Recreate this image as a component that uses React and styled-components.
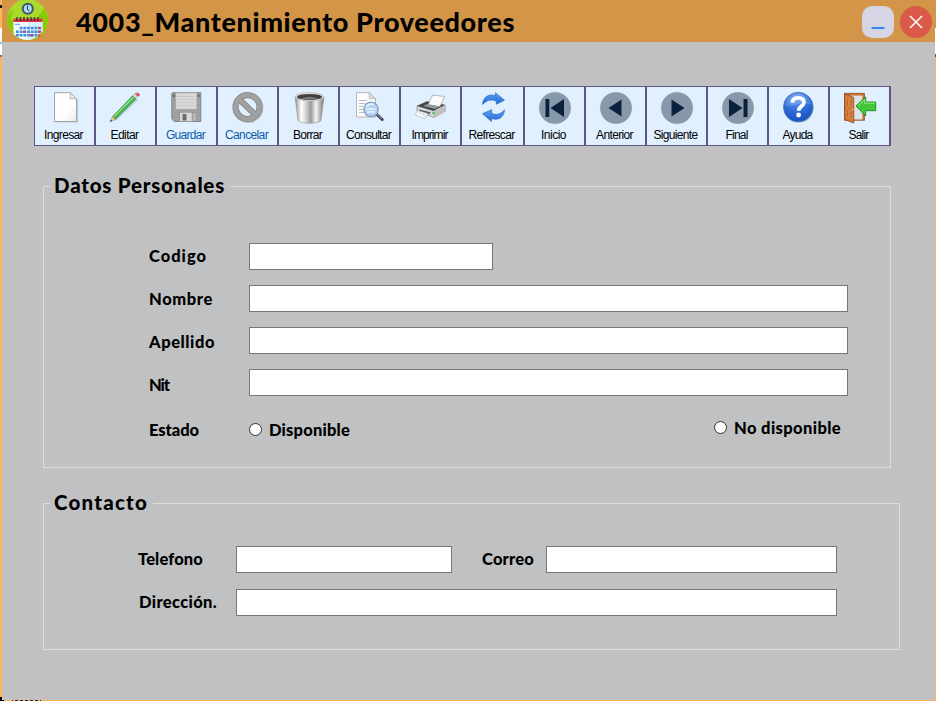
import React, { useLayoutEffect, useRef, useState } from "react";
import styled, { createGlobalStyle } from "styled-components";

const GlobalStyle = createGlobalStyle`
  *, *::before, *::after { box-sizing: border-box; }
  html, body { margin: 0; padding: 0; }
  body { width: 936px; height: 701px; overflow: hidden; background: #ffb45c; }
`;

const gothic = `"Century Gothic", "URW Gothic", Lato, sans-serif`;

const Desktop = styled.div`
  width: 936px;
  height: 701px;
  display: grid;
  grid-template: 700px 1px / 2px 933px 1px;
  overflow: hidden;
`;

const LeftEdge = styled.div`
  background: linear-gradient(
    #ffb45c 0 5px, #111 5px 8px, #ffb45c 8px 28px, #fff 28px 42px,
    #7fc4e0 42px 44px, #fff 44px 55px, #777 55px 57px, #ffb45c 57px 697px, #000 697px
  );
`;

const RightEdge = styled.div`
  background: linear-gradient(#d39547 0 28px, #fff 28px 54px, #555 54px 57px, #ffb45c 57px);
`;

const BottomEdge = styled.div`
  grid-column: 1 / -1;
  background: linear-gradient(90deg, #000 0 4px, #ffb45c 4px 12px, transparent 12px 41px, #ffb45c 41px),
    repeating-linear-gradient(90deg, #222 0 3px, #ffb45c 3px 5px);
`;

const Window = styled.main`
  display: flex;
  flex-direction: column;
  background: #c1c0c2;
`;

const TitleBar = styled.header`
  display: flex;
  height: 42px;
  padding: 0 3px 0 5px;
  background: #d39547;
`;

const Title = styled.h1`
  margin: 0 auto 0 28px;
  font: 900 27px/42px ${gothic};
  padding-top: 1px;
  height: 42px;
  color: #000;
`;

const WindowButton = styled.button`
  width: 32px;
  height: 32px;
  margin: 6px 0 0 6px;
  padding: 0;
  border: 0;
  border-radius: ${(p) => (p.$close ? "50%" : "10px")};
  background: ${(p) => (p.$close ? "#da5a4a" : "#d5d5e3")};
`;

const Toolbar = styled.nav`
  display: flex;
  width: 857px;
  height: 60px;
  margin: 44px 0 0 32px;
  border-right: 1px solid #5b5687;
`;

const ToolButton = styled.button`
  display: flex;
  flex-direction: column;
  align-items: center;
  width: ${(p) => (p.$wide ? 63 : 61)}px;
  height: 60px;
  padding: 5px 0 0 1px;
  border: 1px solid #5b5687;
  background: #e1f0ff;
  color: ${(p) => (p.$muted ? "#0d5cab" : "#000")};
  font: 12px/14px "Liberation Sans", Arial, sans-serif;
`;

const ToolLabel = styled.span`
  margin: 4px 3px 0 0;
`;

const Svg = styled.svg`
  display: block;
  flex: none;
  overflow: visible;
`;

const Group = styled.section`
  width: ${(p) => p.$width}px;
  height: ${(p) => p.$height}px;
  margin: ${(p) => p.$top}px 0 0 41px;
  border: 1px solid #dcdddd;
  background: #bfc1c2;
`;

const Legend = styled.h2`
  width: ${(p) => p.$width}px;
  height: 24px;
  margin: -13px 0 0 6px;
  padding-left: 4px;
  background: #c0c1c2;
  font: 900 20.5px/22px ${gothic};
  color: #000;
`;

const Row = styled.div`
  display: flex;
  align-items: flex-start;
  height: ${(p) => p.$height || 42}px;
  padding-left: ${(p) => p.$indent}px;
`;

const Label = styled.label`
  flex: none;
  width: ${(p) => p.$width}px;
  margin-top: ${(p) => p.$drop || 0}px;
  font: 900 16.5px/26px ${gothic};
  color: #000;
`;

const Field = styled.input`
  flex: none;
  width: ${(p) => p.$width}px;
  height: 27px;
  margin: 0;
  padding: 2px 5px;
  border: 1px solid #777;
  border-radius: 0;
  outline: 0;
  background: #fff;
  font: 16px ${gothic};
`;

const Radio = styled.input`
  appearance: none;
  flex: none;
  width: 13px;
  height: 13px;
  margin: ${(p) => p.$top}px 7px 0 ${(p) => p.$left || 0}px;
  border: 1px solid #333;
  border-radius: 50%;
  background: #fff;
`;

const FitSpan = styled.span`
  display: inline-block;
  white-space: nowrap;
`;

/* Spreads or tightens the letters so that the text takes the given width. */
function Fit({ width, children }) {
  const ref = useRef(null);
  const [spacing, setSpacing] = useState(0);
  useLayoutEffect(() => {
    const natural = ref.current.getBoundingClientRect().width;
    setSpacing((width - natural) / children.length);
  }, [width, children]);
  return (
    <FitSpan ref={ref} style={{ letterSpacing: `${spacing}px` }}>
      {children}
    </FitSpan>
  );
}

const Icon = ({ children }) => (
  <Svg width="32" height="32" viewBox="0 0 32 32">{children}</Svg>
);

const NewIcon = () => (
  <Icon>
    <defs><linearGradient id="paper" x1="0" y1="0" x2="1" y2="1"><stop offset="0" stopColor="#fff" /><stop offset=".6" stopColor="#fff" /><stop offset="1" stopColor="#e9e9e9" /></linearGradient></defs>
    <path d="M6 1.5h16l7 7v22H6z" fill="#b9c0c8" opacity=".7" />
    <path d="M5.5.7h15.8l6.3 6.4v22.4H5.5z" fill="url(#paper)" stroke="#a2a2a2" />
    <path d="M21.3.7q.3 4-.5 6.2 3-.8 6.8.2z" fill="#eee" stroke="#a8a8a8" strokeWidth=".8" />
  </Icon>
);

const EditIcon = () => (
  <Icon>
    <path d="m3 29.500 4-1.500L28 8l-2-2z" fill="#9bb1bd" opacity=".5" />
    <path d="m2.600 24.600 2.800 2.600L26 6.600l-3.200-2.900z" fill="#45b649" stroke="#257d2d" strokeWidth=".7" />
    <path d="m3.900 24.600 19.800-19.500" stroke="#a0e59b" strokeWidth="1.300" />
    <path d="M2.600 24.600.2 29.500l5.200-2.300z" fill="#f0c98c" stroke="#9b7648" strokeWidth=".5" />
    <path d="m.8 27.800-.7 2 2-.7z" fill="#222" />
    <path d="m22.800 3.700 2-2 3.200 2.900-2 2z" fill="#d9dde2" stroke="#8c929b" strokeWidth=".5" />
    <path d="m24.800 1.700 1.200-1q1.200-.7 2.900.5 1.500 1.500.5 2.500L28 4.600z" fill="#d2464f" />
    <path d="m25.700 1.300 2.300-.2" stroke="#f6b2b3" />
  </Icon>
);

const SaveIcon = () => (
  <Icon>
    <path d="M1.500.7h28.300v28.800H3.500l-2.700-2.600V1.400z" fill="#a0a0a0" stroke="#858585" />
    <path d="M5 1h20.500v16H5z" fill="#d9d9d9" stroke="#bdbdbd" strokeWidth=".6" />
    <path d="M6 4.500h18.500M6 7.500h18.500M6 10.500h18.500M6 13.500h18.500" stroke="#c6c6c6" strokeWidth=".9" />
    <path d="M2 2.500h1.800V5H2zM26.700 2.500h1.800V5h-1.800z" fill="#606060" />
    <path d="M8.500 20.500h17.200v8.700H8.500z" fill="#868686" />
    <path d="M9 20.700h11.800v8.500H9z" fill="#dadada" />
    <path d="M11.500 22h4v6.500h-4z" fill="#6d6d6d" />
    <path d="M21.500 21h4v8h-4z" fill="#b5b5b5" />
  </Icon>
);

const CancelIcon = () => (
  <Icon>
    <circle cx="16" cy="15.700" r="12.400" fill="none" stroke="#b8c1ca" strokeWidth="6" />
    <circle cx="15.500" cy="15" r="12" fill="none" stroke="#858585" strokeWidth="6" />
    <path d="m7 7 17 16.500" stroke="#858585" strokeWidth="6" />
    <circle cx="15.500" cy="15" r="12" fill="none" stroke="#a1a1a1" strokeWidth="4.500" />
    <path d="m7 7 17 16.500" stroke="#a1a1a1" strokeWidth="4.500" />
  </Icon>
);

const DeleteIcon = () => (
  <Icon>
    <defs><linearGradient id="steel"><stop offset="0" stopColor="#8d8d8d" /><stop offset=".22" stopColor="#fff" /><stop offset=".38" stopColor="#d2d2d2" /><stop offset=".55" stopColor="#999" /><stop offset=".72" stopColor="#f5f5f5" /><stop offset="1" stopColor="#777" /></linearGradient></defs>
    <path d="m2 4.500 3 24c3 3.700 20 3.700 23 0l3-24z" fill="url(#steel)" stroke="#858585" strokeWidth=".5" />
    <ellipse cx="16.500" cy="4.700" rx="14.500" ry="4.200" fill="#ddd" stroke="#aaa" strokeWidth=".5" />
    <ellipse cx="16.500" cy="4.900" rx="12.500" ry="3" fill="#414141" />
    <path d="M8 6.500q8.500-3.500 17 0-8.500 2-17 0" fill="#777" />
  </Icon>
);

const SearchIcon = () => (
  <Icon>
    <path d="M2.500.6h12.700l6.300 6.200V25h-19z" fill="#fcfcfc" stroke="#b9b6b4" />
    <path d="M15.200.6v6.200h6.300z" fill="#ddd" stroke="#aaa" strokeWidth=".6" />
    <path d="M5 8.500h8M5 11.500h6M5 14.500h4M5 17.500h4M5 20.500h5" stroke="#afc1ce" />
    <path d="m23 22.500 5.200 5" stroke="#39435b" strokeWidth="3" strokeLinecap="round" />
    <path d="m23.500 22.300 4.500 4.200" stroke="#a5b4cd" strokeWidth="1" />
    <circle cx="17" cy="17.300" r="7.200" fill="#b3d2f3" stroke="#8f9fc4" strokeWidth="1.400" />
    <path d="M12 15q3-4 8-2.500M12.500 17h9M13 20h8" stroke="#e9f5ff" strokeWidth="1.500" fill="none" />
  </Icon>
);

const PrintIcon = () => (
  <Icon>
    <path d="M2 14 12 9.500l18 3.500.5 6-11.500 6.500L2 19z" fill="#d5d6d6" stroke="#888" strokeWidth=".7" />
    <path d="m2 14 10-4.500L30 13l-11.500 6z" fill="#424548" />
    <path d="m13 13 4.500-10 12 1.500L25 14.500z" fill="#fafafa" stroke="#9c9c9c" strokeWidth=".7" />
    <path d="m8 14 4-2 13 2.500-5 2.500z" fill="#90979b" />
    <path d="m19 19 11.500-6v6L19 25.500z" fill="#bfc0bf" />
    <path d="m4 17.500 11.500 2.700-1 2L4 19.500z" fill="#53585b" />
    <path d="m3 18.500 9.500 3-2.500 5.500L0 22.500z" fill="#f7fbfc" stroke="#a4aeb4" strokeWidth=".6" />
    <path d="m3.500 20.500 6 2-1 2.500" stroke="#bed5df" fill="none" />
    <circle cx="18.500" cy="21" r="1.200" fill="#45bd4b" />
  </Icon>
);

const RefreshIcon = () => (
  <Icon>
    <defs><linearGradient id="blueArrow" x1="0" y1="0" x2="0" y2="1"><stop offset="0" stopColor="#5ea2f5" /><stop offset="1" stopColor="#2468d6" /></linearGradient></defs>
    <path d="M5.500 12.500C6 4.500 13 1 18.500 4V.7L27.500 8.300l-8.200 3.900V9.300C14 6.500 9.500 8.500 5.500 12.500z" fill="url(#blueArrow)" stroke="#286bc4" strokeWidth=".7" />
    <path d="M27.500 18c-.5 8-7.500 11-13 8.300v3.200L5.500 21.700l9.200-4v3.500c4.800 2.500 9 .8 12.800-3.200z" fill="url(#blueArrow)" stroke="#286bc4" strokeWidth=".7" />
  </Icon>
);

const navShapes = {
  first: "M6.500 7h3.800v18H6.500zM11.500 16 25 7v18z",
  prev: "M8.500 16 21.500 7.500v17z",
  next: "M10.500 7.500v17L23.500 16z",
  last: "M7 7v18l13.500-9zM21.500 7h4v18h-4z",
};

const NavIcon = ({ kind }) => (
  <Icon>
    <circle cx="16" cy="16" r="15.800" fill="#8798aa" stroke="#9e9f98" strokeWidth=".4" />
    <path d={navShapes[kind]} fill="#0a213d" />
  </Icon>
);

const HelpIcon = () => (
  <Icon>
    <defs><radialGradient id="help" cx=".45" cy=".2" r=".8"><stop offset="0" stopColor="#6b9fee" /><stop offset=".5" stopColor="#3270da" /><stop offset="1" stopColor="#1453bd" /></radialGradient></defs>
    <circle cx="15.700" cy="15.800" r="15" fill="#a9b9ce" />
    <circle cx="15.200" cy="15" r="14.700" fill="url(#help)" stroke="#3d6fc0" strokeWidth=".7" />
    <path d="M2 14C3 5 9 1.500 15 1.500S27 5 28.500 13q-6-3-13-1T2 14z" fill="#fff" opacity=".15" />
    <path d="M9.500 10.700q0-4.800 5.700-4.800 5.700 0 5.700 4.500c0 4-5.200 3.700-5.200 8.300" fill="none" stroke="#fff" strokeWidth="3.800" />
    <circle cx="15.600" cy="23" r="2.400" fill="#fff" />
  </Icon>
);

const ExitIcon = () => (
  <Icon>
    <path d="M.5 1.300h20v27H.5z" fill="#c56b2b" stroke="#98491b" strokeWidth=".7" />
    <path d="M4 3.500h14.500v24H4z" fill="#dce2e6" />
    <path d="m.7 1.500 9 4v25.500l-9-3.500z" fill="#d27936" stroke="#93471b" strokeWidth=".8" />
    <path d="m2.500 5 2 .9v8.700l-2-.7zM6 6.600l2 .8V16l-2-.8zM2.500 17l2 .8v8l-2-.7zM6 18.500l2 .7V27l-2-.8z" fill="#bd6328" stroke="#e4a063" strokeWidth=".5" />
    <circle cx="8.800" cy="17.500" r=".8" fill="#ffe293" />
    <path d="m12 14 9.700-9v5h10v8.700h-10V24z" fill="#42c737" stroke="#168b20" strokeWidth=".9" />
    <path d="m14 13.700 6.700-6v3.500h10" fill="none" stroke="#98ef83" />
  </Icon>
);

const CalendarLogo = () => (
  <Svg width="41" height="41" viewBox="0 0 41 41">
    <circle cx="20.500" cy="19.500" r="20.500" fill="#a9db2c" />
    <path d="M0 19.500A20.500 20.500 0 0 0 41 20Q41 14 37 8L30 18 4 20 6 10Q0 14 0 19.500z" fill="#89ca07" />
    <path d="M6.500 20h29v11.500Q28 40 20.500 40T6.500 34z" fill="#f2f7fc" />
    <path d="M21 20h14.500v11.500Q29 39 21 40z" fill="#d5effa" />
    <path d="M6.500 18.700h29V22h-29z" fill="#e62d42" />
    <path d="M10 17v4M13.500 17v4M17 17v4M20.500 17v4M24 17v4M27.500 17v4M31 17v4" stroke="#34383f" strokeWidth="1.400" />
    <path d="M8 24.300h5" stroke="#4b9ce8" />
    <path d="M12.700 28H35M9 31.700h26M9 35.300h22" stroke="#3d8ee0" strokeWidth="2.400" strokeDasharray="2.800 .9" />
    <path d="M31 27h2.500v2H31zM31 30.700h2.500v2H31zM16 30.700h2.500v2H16zM23 34.300h3v2h-3zM31 34.300h2.500v2H31z" fill="#e93449" />
    <circle cx="20.800" cy="8.800" r="5" fill="#a7dbf3" stroke="#42536c" strokeWidth="2" />
    <path d="M20.500 5.500v4l2 1.500" stroke="#273d59" fill="none" />
  </Svg>
);

const tools = [
  ["Ingresar", 39, NewIcon], ["Editar", 28, EditIcon], ["Guardar", 39, SaveIcon, true],
  ["Cancelar", 43, CancelIcon, true], ["Borrar", 29, DeleteIcon], ["Consultar", 45, SearchIcon],
  ["Imprimir", 36, PrintIcon], ["Refrescar", 46, RefreshIcon],
  ["Inicio", 25, NavIcon, false, "first"], ["Anterior", 37, NavIcon, false, "prev"],
  ["Siguiente", 44, NavIcon, false, "next"], ["Final", 22, NavIcon, false, "last"],
  ["Ayuda", 30, HelpIcon], ["Salir", 20, ExitIcon],
];

const personFields = [
  ["Codigo", 58, 244, 0], ["Nombre", 64, 599, 1], ["Apellido", 66, 599, 2], ["Nit", 20, 599, 3],
];

const FormBody = styled.div`
  padding-top: ${(p) => p.$top}px;
`;

export default function App() {
  return (
    <>
      <GlobalStyle />
      <Desktop>
        <LeftEdge />
        <Window>
          <TitleBar>
            <CalendarLogo />
            <Title><Fit width={439}>4003_Mantenimiento Proveedores</Fit></Title>
            <WindowButton aria-label="Minimizar">
              <Svg width="32" height="32"><path d="M9.500 22h13" stroke="#3487f2" strokeWidth="2" /></Svg>
            </WindowButton>
            <WindowButton $close aria-label="Cerrar">
              <Svg width="32" height="32"><path d="m10 10 12 12M22 10 10 22" stroke="#fff" strokeWidth="1.500" /></Svg>
            </WindowButton>
          </TitleBar>
          <Toolbar>
            {tools.map(([name, width, Glyph, muted, kind]) => (
              <ToolButton key={name} $muted={muted} $wide={name === "Refrescar"}>
                <Glyph kind={kind} />
                <ToolLabel><Fit width={width}>{name}</Fit></ToolLabel>
              </ToolButton>
            ))}
          </Toolbar>
          <Group $width={848} $height={282} $top={40}>
            <Legend $width={180}><Fit width={171}>Datos Personales</Fit></Legend>
            <FormBody $top={45}>
              {personFields.map(([name, textWidth, fieldWidth, drop]) => (
                <Row key={name} $indent={105}>
                  <Label $width={100} $drop={drop} htmlFor={name}><Fit width={textWidth}>{name}</Fit></Label>
                  <Field id={name} $width={fieldWidth} />
                </Row>
              ))}
              <Row $indent={105}>
                <Label as="span" $width={100} $drop={6}><Fit width={50}>Estado</Fit></Label>
                <Radio type="radio" name="estado" id="si" $top={12} />
                <Label $width={81} $drop={6} htmlFor="si"><Fit width={81}>Disponible</Fit></Label>
                <Radio type="radio" name="estado" id="no" $top={10} $left={364} />
                <Label $width={108} $drop={4} htmlFor="no"><Fit width={107}>No disponible</Fit></Label>
              </Row>
            </FormBody>
          </Group>
          <Group $width={857} $height={147} $top={35}>
            <Legend $width={103}><Fit width={94}>Contacto</Fit></Legend>
            <FormBody $top={31}>
              <Row $indent={94} $height={43}>
                <Label $width={98} htmlFor="tel"><Fit width={65}>Telefono</Fit></Label>
                <Field id="tel" $width={216} />
                <Row $indent={30}>
                  <Label $width={64} htmlFor="mail"><Fit width={52}>Correo</Fit></Label>
                  <Field id="mail" $width={291} />
                </Row>
              </Row>
              <Row $indent={95}>
                <Label $width={97} htmlFor="dir"><Fit width={78}>Dirección.</Fit></Label>
                <Field id="dir" $width={601} />
              </Row>
            </FormBody>
          </Group>
        </Window>
        <RightEdge />
        <BottomEdge />
      </Desktop>
    </>
  );
}
